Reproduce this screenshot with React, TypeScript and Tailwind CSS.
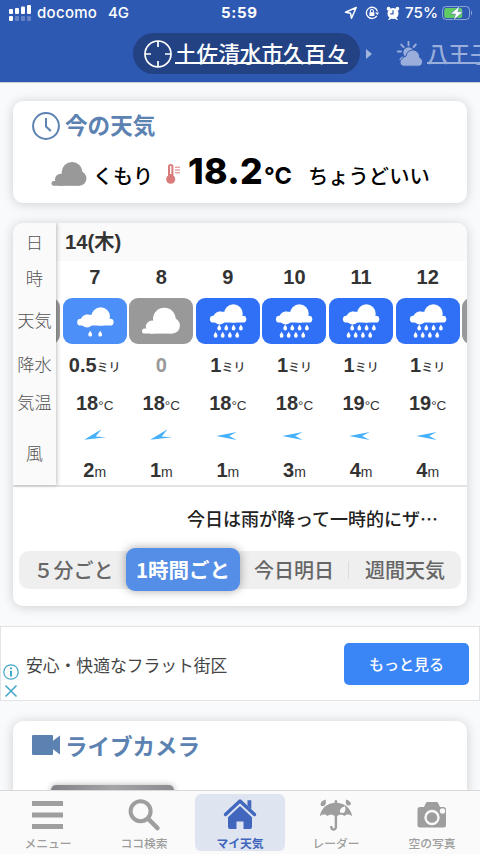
import type { ReactNode } from 'react'
import clsx from 'clsx'

type Weather = 'drizzle' | 'cloud' | 'rain'

interface Hour {
  hour: string
  weather: Weather
  rain: string
  temp: string
  wind: string
  dir: 'wsw' | 'w'
}

const hours: Hour[] = [
  { hour: '7', weather: 'drizzle', rain: '0.5', temp: '18', wind: '2', dir: 'wsw' },
  { hour: '8', weather: 'cloud', rain: '0', temp: '18', wind: '1', dir: 'wsw' },
  { hour: '9', weather: 'rain', rain: '1', temp: '18', wind: '1', dir: 'w' },
  { hour: '10', weather: 'rain', rain: '1', temp: '18', wind: '3', dir: 'w' },
  { hour: '11', weather: 'rain', rain: '1', temp: '19', wind: '4', dir: 'w' },
  { hour: '12', weather: 'rain', rain: '1', temp: '19', wind: '4', dir: 'w' },
]

function BigCloud() {
  return (
    <g>
      <circle cx="22.3" cy="11.3" r="11.3" />
      <circle cx="29.9" cy="17.8" r="8" />
      <circle cx="10" cy="19" r="6.2" />
      <rect x="0" y="20.6" width="14" height="5.2" rx="2.6" />
      <rect x="8" y="15" width="22" height="10.8" />
    </g>
  )
}

function SmallCloud() {
  return (
    <g>
      <circle cx="23.5" cy="9.3" r="9.3" />
      <circle cx="9.8" cy="13.8" r="6.4" />
      <rect x="0" y="11.6" width="36.4" height="6.8" rx="3.4" />
      <path d="M9 7.5h9l8 4v5H9Z" />
    </g>
  )
}

const DROP = 'M0 0C1.1 1.7 1.9 2.8 1.9 4A1.9 1.9 0 0 1-1.9 4C-1.9 2.8-1.1 1.7 0 0Z'

const rainDrops = [
  [9.3, 20.4], [16.4, 20.4], [23.7, 20.4], [31, 20.4],
  [5.7, 27.6], [12.8, 27.6], [20, 27.6], [27.3, 27.6],
]

function WeatherTile({ weather }: { weather: Weather }) {
  return (
    <div
      className={clsx(
        'h-[46px] w-16 rounded-[9px]',
        weather === 'drizzle' && 'bg-[#4d8ff9]',
        weather === 'cloud' && 'bg-[#999999]',
        weather === 'rain' && 'bg-[#2f70f7]'
      )}
    >
      <svg viewBox="0 0 64 46" className="h-[46px] w-16" fill="#fff">
        {weather === 'cloud' && (
          <g transform="translate(13 9.8)">
            <BigCloud />
          </g>
        )}
        {weather === 'drizzle' && (
          <g transform="translate(14.2 9.2)">
            <SmallCloud />
            <path d={DROP} transform="translate(13 23.5)" />
            <path d={DROP} transform="translate(23 23.5)" />
          </g>
        )}
        {weather === 'rain' && (
          <g transform="translate(13.9 6.2)">
            <SmallCloud />
            {rainDrops.map(([x, y]) => (
              <path key={`${x}-${y}`} d={DROP} transform={`translate(${x} ${y})`} />
            ))}
          </g>
        )}
      </svg>
    </div>
  )
}

function WindArrow({ dir }: { dir: Hour['dir'] }) {
  return (
    <svg viewBox="0 0 30 20" className="h-5 w-[30px]" fill="#45b0fb">
      {dir === 'wsw' ? (
        <path d="M4.2 13.7 21.5 3.3 15.7 10.6 26 11.3Z" />
      ) : (
        <path d="M3.2 10 23.8 6 16.2 9.9 23.8 14Z" />
      )}
    </svg>
  )
}

// neighbouring hour, only the edge of its tile peeks in
function PeekColumn() {
  return (
    <div className="flex w-[66.6px] shrink-0 justify-center pt-[37px]">
      <WeatherTile weather="cloud" />
    </div>
  )
}

function HourColumn({ data }: { data: Hour }) {
  return (
    <div className="flex w-[66.6px] shrink-0 flex-col items-center font-['Liberation_Sans','Noto_Sans_CJK_JP',sans-serif] text-[20px] font-bold text-[#333]">
      <div className="flex h-8 items-center">{data.hour}</div>
      <div className="flex h-14 items-center">
        <WeatherTile weather={data.weather} />
      </div>
      <div className="flex h-[33px] items-baseline leading-[33px]">
        {data.rain === '0' ? (
          <span className="text-[#999]">0</span>
        ) : (
          <>
            {data.rain}
            <span className="text-[12px] font-medium leading-none">ミリ</span>
          </>
        )}
      </div>
      <div className="flex h-[39px] items-baseline leading-[42px]">
        {data.temp}
        <span className="text-[13.5px] font-normal leading-none">°C</span>
      </div>
      <div className="flex h-[30px] items-center">
        <WindArrow dir={data.dir} />
      </div>
      <div className="flex h-[34px] items-baseline leading-[38px]">
        {data.wind}
        <span className="text-[14px] font-normal leading-none">m</span>
      </div>
    </div>
  )
}

function StatusBar() {
  return (
    <div className="flex h-[26px] items-center font-[Inter,sans-serif] text-[15px] font-medium text-white">
      <svg viewBox="0 0 22 17" className="ml-[9px] mb-[2px] h-[17px] w-[22px] shrink-0" fill="#fff">
        <rect x="0" y="5" width="4" height="5" rx="1" />
        <rect x="6" y="4" width="4" height="6" rx="1" />
        <rect x="12" y="2.5" width="4" height="7.5" rx="1" />
        <rect x="18" y="1" width="4" height="9" rx="1" />
        <rect x="0" y="12" width="4" height="5" rx="1" />
        <g opacity=".25">
          <rect x="6" y="12" width="4" height="5" rx="1" />
          <rect x="12" y="12" width="4" height="5" rx="1" />
          <rect x="18" y="12" width="4" height="5" rx="1" />
        </g>
      </svg>
      <span className="ml-1.5 w-[71px] pt-px tracking-[0.3px]">docomo</span>
      <span className="w-[113px] pt-px">4G</span>
      <span className="w-[123px] pt-px font-bold tracking-[0.7px]">5:59</span>
      <svg viewBox="0 0 14 14" className="h-3.5 w-3.5 shrink-0" fill="none" stroke="#fff" strokeWidth="1.5" strokeLinejoin="round">
        <path d="M12.2 1.5 1.5 6.2 6.5 7.2 7.5 12.3Z" />
      </svg>
      <svg viewBox="0 0 14 14" className="ml-[7px] h-3.5 w-3.5 shrink-0" fill="none" stroke="#fff" strokeWidth="1.3">
        <path d="M11.8 9.8A5.6 5.6 0 1 1 12.4 5.4" />
        <path d="M10 6.5h4L12.4 9Z" fill="#fff" stroke="none" />
        <path d="M5.4 6.3V5a1.5 1.5 0 0 1 3 0v1.3" strokeWidth="1.1" />
        <rect x="4.4" y="6.2" width="5" height="3.9" rx=".5" fill="#fff" stroke="none" />
      </svg>
      <svg viewBox="0 0 14 14" className="ml-[7px] h-3.5 w-3.5 shrink-0" fill="#fff">
        <circle cx="7" cy="7.4" r="5.5" />
        <circle cx="2.6" cy="2.7" r="1.9" />
        <circle cx="11.4" cy="2.7" r="1.9" />
        <path d="m2 13.8 2.3-3 1.5 1.4L3.2 14ZM12 13.8l-2.3-3-1.5 1.4L10.8 14Z" />
        <path d="M7 4.2v3.6H4.3" fill="none" stroke="#2e59b2" strokeWidth="1.2" />
      </svg>
      <span className="ml-[5px] w-[37px] pt-px text-[15.2px]">75%</span>
      <svg viewBox="0 0 31 14" className="h-3.5 w-[31px] shrink-0">
        <rect x=".5" y=".5" width="27" height="13" rx="3.6" fill="none" stroke="#fff" strokeOpacity=".45" />
        <path d="M29 4.8c1.5.5 1.5 3.9 0 4.4Z" fill="#fff" fillOpacity=".45" />
        <rect x="2.2" y="2" width="18" height="10" rx="2" fill="#62cc64" />
        <path d="M17.6 0 8.6 8h5l-2 6L21 5.800h-5.200Z" fill="#fff" stroke="#2e59b2" strokeWidth=".4" />
      </svg>
    </div>
  )
}

function Header() {
  return (
    <header className="h-[82px] shrink-0 overflow-hidden bg-[#2e59b2] shadow-[0_1px_0_#c9cdd6]">
      <StatusBar />
      <div className="flex h-[55px] items-center">
        <div className="ml-[133px] flex h-[41px] w-[227px] shrink-0 items-center rounded-full bg-[#234284] pl-[11px]">
          <svg viewBox="0 0 28 28" className="h-7 w-7" fill="none" stroke="#fff" strokeWidth="1.7">
            <circle cx="14" cy="14" r="13" />
            <path d="M14 1v6M14 21v6M1 14h6M21 14h6" />
          </svg>
          <span className="ml-[3px] mb-[1px] whitespace-nowrap text-[21.6px] font-medium leading-none text-white underline decoration-[1.5px] underline-offset-[0px] [text-decoration-skip-ink:none]">
            土佐清水市久百々
          </span>
        </div>
        <svg viewBox="0 0 6 10" className="ml-1.5 h-2.5 w-1.5 shrink-0" fill="#a3b5dc">
          <path d="M0 0 6 5 0 10Z" />
        </svg>
        <svg viewBox="0 0 28 26" className="ml-[25px] h-[26px] w-7 shrink-0" fill="#9aaedb">
          <path
            d="M11.5.8v3.4M4.2 3.6l2.400 2.400M.8 10.500h3.200M18.800 3.500l-2.200 2.500M3.500 18.500l2-2"
            stroke="#9aaedb"
            strokeWidth="1.9"
            strokeLinecap="round"
          />
          <circle cx="11.500" cy="11.500" r="5.200" />
          <path
            d="M6 25.200a4 4 0 0 1-1-7.400 5 5 0 0 1 4-2.600 6.800 6.800 0 0 1 13.600 1.200A4.700 4.700 0 0 1 22.600 25.200Z"
            stroke="#2e59b2"
            strokeWidth="1"
          />
        </svg>
        <span className="ml-[2px] mb-[1px] whitespace-nowrap text-[21.6px] font-medium leading-none text-[#9aaedb] underline decoration-[1.5px] underline-offset-[0px] [text-decoration-skip-ink:none]">
          八王子
        </span>
      </div>
    </header>
  )
}

function Card({ className, children }: { className?: string; children: ReactNode }) {
  return (
    <section className={clsx('mx-[13px] shrink-0 rounded-[10px] bg-white shadow-[0_1px_12px_rgba(0,0,0,0.18)]', className)}>
      {children}
    </section>
  )
}

function CurrentWeather() {
  return (
    <Card className="mt-[19px] h-[102px] pt-[11px]">
      <h2 className="flex h-7 items-center pl-[19px] text-[22.6px] font-bold text-[#5c82b2]">
        <svg viewBox="0 0 28 28" className="mr-[5px] h-7 w-7" fill="none" stroke="#5c82b2" strokeWidth="2">
          <circle cx="14" cy="14" r="12.9" />
          <path d="M14 6v8.5l4.8 4.5" />
        </svg>
        <span className="mb-px leading-none">今の天気</span>
      </h2>
      <div className="flex h-[50px] items-baseline pl-[38px] leading-[64px] text-black">
        <svg viewBox="0 0 38 26" className="h-6 w-9 self-center translate-y-[9px]" fill="#999">
          <BigCloud />
        </svg>
        <span className="ml-[6px] w-[73px] text-[20px] font-medium leading-none">くもり</span>
        <svg viewBox="0 0 14 20" className="h-5 w-3.5 self-center translate-y-[9px]" fill="#da7b7b">
          <circle cx="4.7" cy="15.3" r="4.5" />
          <rect x="2" y="0" width="5.4" height="16" rx="2.7" />
          <rect x="4" y="2" width="1.4" height="8" fill="#fff" />
          <path d="M9 3.2h5M9 6h5M9 8.8h5" stroke="#da7b7b" strokeWidth="1" />
        </svg>
        <span className="ml-[8px] w-[75px] font-[Inter,sans-serif] text-[35.500px] font-extrabold tracking-[0.3px]">18.2</span>
        <span className="w-[45px] pl-px font-[Inter,sans-serif] text-[23.500px] font-bold">°C</span>
        <span className="text-[20.3px] font-medium leading-none">ちょうどいい</span>
      </div>
    </Card>
  )
}

const tabs = [
  { label: '５分ごと', box: 'w-[107px] pl-[2px]' },
  { label: '1時間ごと', box: 'w-[114px]' },
  { label: '今日明日', box: 'w-[108px]' },
  { label: '週間天気', box: 'w-[113px]' },
]

function Forecast() {
  return (
    <Card className="mt-5 h-[383px] overflow-clip [overflow-clip-margin:0px]">
      <div className="flex h-[264px] border-b-2 border-[#e3e3e3]">
        <div className="relative z-10 flex w-[43px] shrink-0 flex-col items-center bg-[#fafafa] text-[17.3px] font-light leading-none text-[#555] shadow-[1px_0_4px_rgba(0,0,0,0.25)]">
          <div className="flex h-[38px] items-center">日</div>
          <div className="flex h-[34px] items-center">時</div>
          <div className="flex h-[51px] items-center">天気</div>
          <div className="flex h-[37px] items-center">降水</div>
          <div className="flex h-[39px] items-center">気温</div>
          <div className="flex h-[64px] items-center">風</div>
        </div>
        <div className="min-w-0 flex-1 overflow-hidden">
          <div className="flex h-[38px] items-center bg-[#fafafa] pl-[9px] font-['Liberation_Sans','Noto_Sans_CJK_JP',sans-serif] text-[20.3px] font-bold leading-none text-[#333]">
            14(木)
          </div>
          <div className="-ml-[61.2px] flex">
            <PeekColumn />
            {hours.map((h) => (
              <HourColumn key={h.hour} data={h} />
            ))}
            <PeekColumn />
          </div>
        </div>
      </div>
      <p className="mt-[21px] pr-[29px] text-right text-[18px] font-medium leading-[20px] text-[#222]">
        今日は雨が降って一時的にザ…
      </p>
      <div className="mx-1.5 mt-[23px] flex h-[38px] items-center rounded-[10px] bg-[#efefef] text-[20px] leading-none">
        {tabs.map((tab, i) =>
          i === 1 ? (
            <button
              key={tab.label}
              className="mb-[2px] flex h-[43px] w-[114px] shrink-0 items-center justify-center rounded-[9px] bg-[#558ee6] text-[20.5px] font-bold text-white shadow-[0_0_10px_rgba(0,0,0,0.35)]"
            >
              {tab.label}
            </button>
          ) : (
            <button
              key={tab.label}
              className={clsx(
                'flex h-[18px] shrink-0 items-center justify-center font-medium text-[#666]',
                tab.box,
                i === 3 && 'border-l border-[#dcdcdc]'
              )}
            >
              {tab.label}
            </button>
          )
        )}
      </div>
    </Card>
  )
}

function AdBanner() {
  return (
    <div className="mt-5 flex h-[75px] shrink-0 items-center border border-[#e2e3e5] bg-white pr-2.5">
      <svg viewBox="0 0 16 36" className="mt-[34px] ml-[2px] h-9 w-4" fill="none" stroke="#3fa6c9" strokeWidth="1.5">
        <circle cx="8" cy="9" r="7.2" strokeWidth="1.2" />
        <path d="M8 7.8v5.6M8 4.4v1.8" strokeWidth="2" />
        <path d="m2.5 22.5 11 11M13.5 22.5l-11 11" />
      </svg>
      <p className="mt-[3px] ml-[7px] flex-1 text-[16.8px] leading-none text-[#444]">安心・快適なフラット街区</p>
      <button className="h-[42px] w-[125px] rounded-[5px] bg-[#3b86f7] text-[15px] font-medium leading-none text-white">
        もっと見る
      </button>
    </div>
  )
}

function LiveCamera() {
  return (
    <Card className="mt-5 h-[200px] pt-[10px]">
      <h2 className="flex h-7 items-center pl-[19px] text-[22.5px] font-bold text-[#5c82b2]">
        <svg viewBox="0 0 28 20" className="mr-[5px] h-5 w-7" fill="#5c82b2">
          <rect width="21" height="20" rx="1" />
          <path d="M28 .5v19l-8-6v-7Z" />
        </svg>
        <span className="mt-px leading-none">ライブカメラ</span>
      </h2>
      <div className="mt-[26px] ml-[38px] h-20 w-[123px] rounded-[5px] bg-linear-to-r from-[#818187] via-[#a5a5a8] to-[#8b8b90] shadow-[0_0_6px_rgba(0,0,0,0.3)]" />
    </Card>
  )
}

function NavItem({ label, active, children }: { label: string; active?: boolean; children: ReactNode }) {
  return (
    <button
      className={clsx(
        'mt-[3px] flex h-[57px] w-[90px] flex-col items-center rounded-[6px] text-[11.8px] leading-none',
        active ? 'bg-[#dee4f0] font-bold text-[#4067bd]' : 'font-medium text-[#9e9e9e]'
      )}
    >
      <svg viewBox="0 0 34 34" className="mt-1 mb-[5px] h-[34px] w-[34px]" fill="currentColor">
        {children}
      </svg>
      {label}
    </button>
  )
}

function BottomNav() {
  return (
    <nav className="fixed inset-x-0 bottom-0 z-20 flex h-16 justify-between border-t border-[#d8d8d8] bg-[#fafafa] px-[3px]">
      <NavItem label="メニュー">
        <path d="M1 3h31v5H1ZM1 14.500h31v5H1ZM1 26h31v5H1Z" />
      </NavItem>
      <NavItem label="ココ検索">
        <g fill="none" stroke="currentColor">
          <circle cx="13.6" cy="13.2" r="10" strokeWidth="4" />
          <path d="m21 20.6 9.5 9.5" strokeWidth="4.4" strokeLinecap="round" />
        </g>
      </NavItem>
      <NavItem label="マイ天気" active>
        <path d="M2.500 16.500 17 3 31.500 16.500" fill="none" stroke="currentColor" strokeWidth="3.400" strokeLinecap="round" strokeLinejoin="round" />
        <path d="M24.500 2.300h3.800v9l-3.800-3.500ZM17 8 29 19.200v9.800a2 2 0 0 1-2 2h-6.500v-7.500h-7V31H7a2 2 0 0 1-2-2v-9.800Z" />
      </NavItem>
      <NavItem label="レーダー">
        <path d="M15.7 2.2h2.4v2.6C26 5.3 32 10.5 33.2 18.5c-2.5-2.5-5.5-2.5-7.6-.5-2.3-2-5-2-7.5 0V29c0 4.8-7 4.800-7 .2v-1.300h2.400v1.400c0 1.600 2.200 1.600 2.200-.3V18c-2.400-2-5.200-2-7.500 0-2-2-5-2-7.400.5C2 10.500 8 5.300 15.700 4.800Z" />
        <path d="M6.600 1.500C7.300 5 6.700 8.200 4 8.200-.2 8.200 1 3 6.600 1.500ZM27 1.500C26.400 4.800 27 7.300 29.500 7.500 33.500 7.500 32.500 3 27 1.500Z" />
        <path d="M26 8.200C27 12 26 15 23.400 15 19 15 20.500 9.500 26 8.200Z" fill="#fafafa" />
      </NavItem>
      <NavItem label="空の写真">
        <path d="M5 9h4l2-4.300q.4-.8 1.200-.8h9.600q.8 0 1.200.8l2 4.300h3.500q2.500 0 2.500 2.500V27q0 2.500-2.500 2.500H5q-2.500 0-2.500-2.500V11.500Q2.500 9 5 9Z" />
        <circle cx="17" cy="19.500" r="6.500" fill="none" stroke="#fafafa" strokeWidth="2.400" />
        <circle cx="27.500" cy="13" r="2.700" fill="#fafafa" />
      </NavItem>
    </nav>
  )
}

export default function App() {
  return (
    <div className="flex h-[854px] w-[480px] flex-col overflow-hidden bg-[#f9fafc] font-['Noto_Sans_CJK_JP',sans-serif]">
      <Header />
      <CurrentWeather />
      <Forecast />
      <AdBanner />
      <LiveCamera />
      <BottomNav />
    </div>
  )
}
